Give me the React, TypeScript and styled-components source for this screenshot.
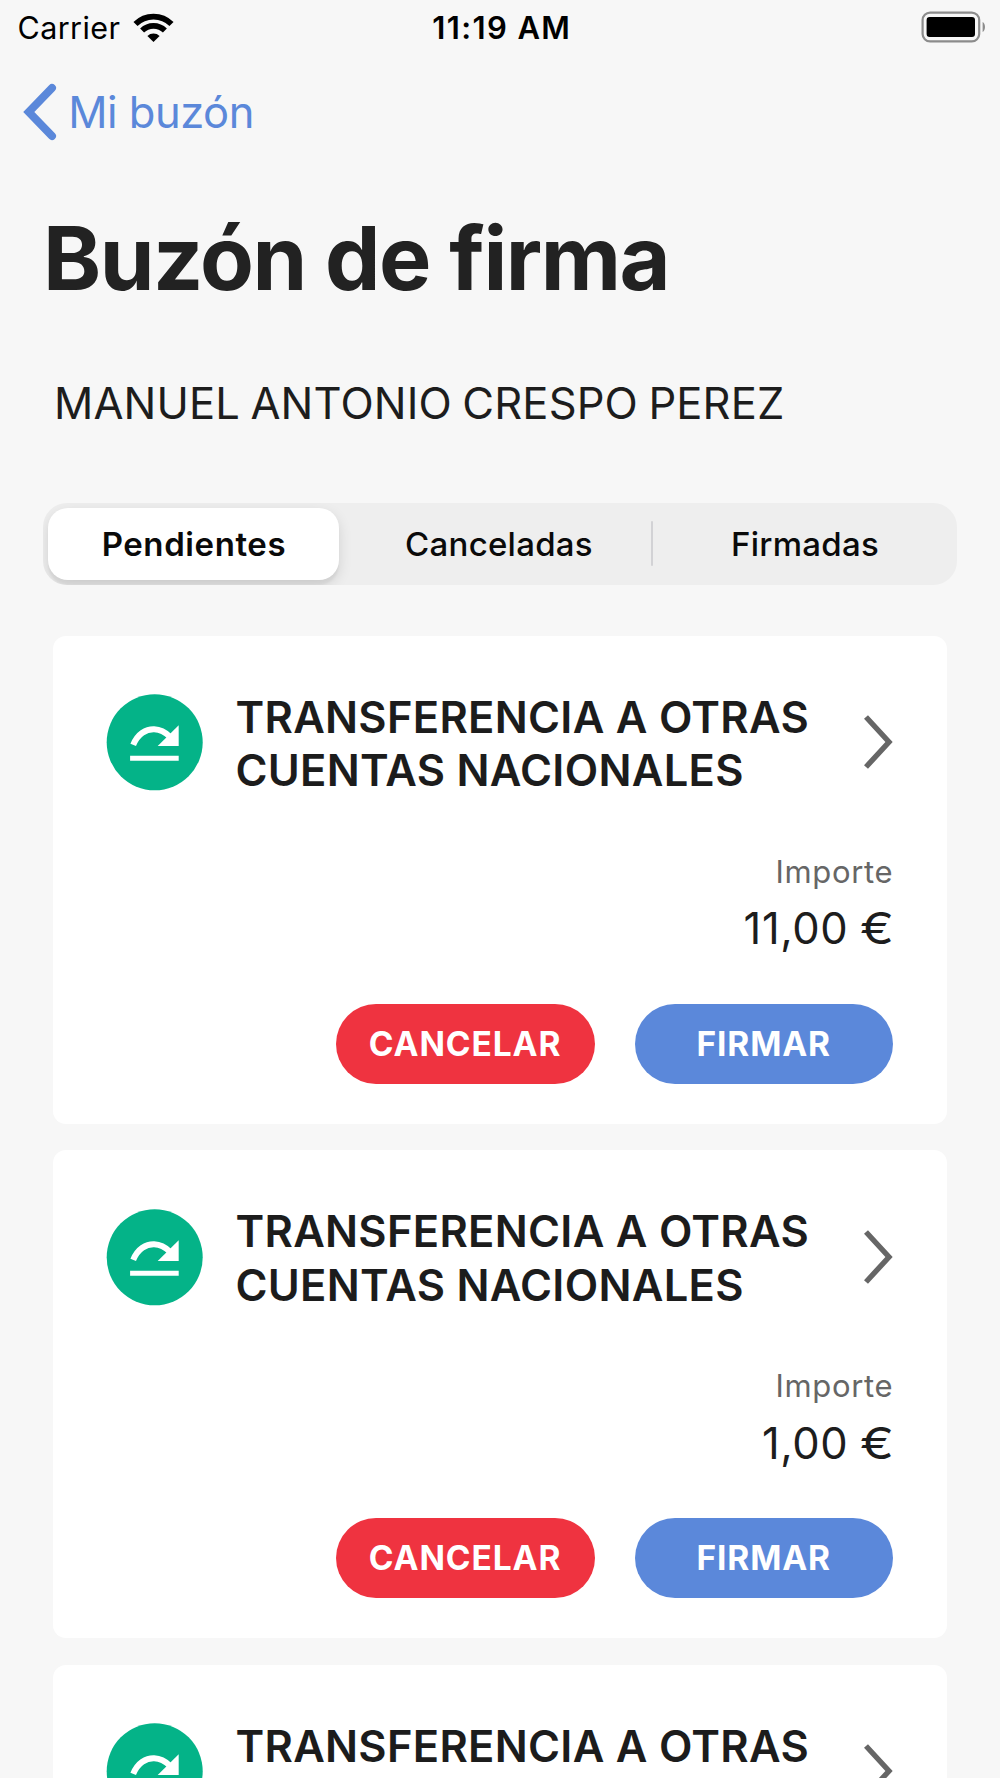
import React from "react";
import styled, { createGlobalStyle } from "styled-components";

const GlobalStyle = createGlobalStyle`
  *, *::before, *::after { box-sizing: border-box; }
  html, body { margin: 0; padding: 0; background: #f7f7f7; }
  body { font-family: Inter, "Liberation Sans", sans-serif; color: #1d1d1d; }
  h1, h2, p { margin: 0; }
  button { font-family: inherit; border: 0; padding: 0; margin: 0; background: none; color: inherit; }
  svg { display: block; flex: none; }
`;

const Screen = styled.div`
  width: 1000px;
  height: 1778px;
  overflow: hidden;
  background: #f7f7f7;
  display: flex;
  flex-direction: column;
`;

const StatusBar = styled.div`
  flex: none;
  height: 54px;
  padding: 0 14px 0 17.5px;
  display: grid;
  grid-template-columns: 1fr auto 1fr;
  align-items: center;
  color: #000;
  font-size: 30.5px;
  line-height: 53px;
`;

const CarrierBox = styled.div`
  display: flex;
  align-items: center;
  gap: 12.5px;
  letter-spacing: 0.42px;
`;

const Clock = styled.div`
  padding-top: 1px;
  font-size: 31px;
  font-weight: 600;
  line-height: 54px;
  letter-spacing: 1.4px;
`;

const BatteryBox = styled.div`
  display: flex;
  justify-content: flex-end;
  padding-bottom: 1px;
`;

const NavBar = styled.nav`
  flex: none;
  height: 116px;
  padding-left: 21px;
  display: flex;
  align-items: center;
`;

const BackLink = styled.button`
  display: flex;
  align-items: center;
  gap: 9.3px;
  color: #5b88da;
  font-size: 43.5px;
  letter-spacing: -0.5px;
  line-height: 60px;
`;

const PageTitle = styled.h1`
  flex: none;
  margin-top: 35px;
  padding-left: 43px;
  font-size: 88px;
  font-weight: 700;
  line-height: 106px;
  letter-spacing: -1.53px;
  color: #222;
`;

const HolderName = styled.p`
  flex: none;
  margin-top: 66px;
  padding-left: 54px;
  font-size: 43.5px;
  line-height: 52px;
  letter-spacing: 0.14px;
  word-spacing: -2px;
`;

const Segmented = styled.div`
  flex: none;
  margin: 73.7px 43px 0 43.3px;
  height: 82.3px;
  padding: 5px 0 5px 4.7px;
  border-radius: 24px;
  background: #eee;
  overflow: hidden;
  display: flex;
  align-items: center;
`;

const Segment = styled.button<{ $active?: boolean }>`
  height: 72px;
  width: ${(p) => (p.$active ? "290.8px" : "304px")};
  margin-right: ${(p) => (p.$active ? "8.2px" : "0")};
  padding-left: ${(p) => (p.$active ? "1px" : "0")};
  border-radius: 20px;
  background: ${(p) => (p.$active ? "#fff" : "transparent")};
  box-shadow: ${(p) => (p.$active ? "0 5px 14px rgba(0, 0, 0, 0.12), 0 5px 2px rgba(0, 0, 0, 0.04)" : "none")};
  font-size: 33px;
  font-weight: ${(p) => (p.$active ? 600 : 500)};
  letter-spacing: ${(p) => (p.$active ? "0.58px" : "0.25px")};
  line-height: 72px;
  text-align: center;
  color: #0a0a0a;
`;

const Divider = styled.span`
  width: 2px;
  height: 45px;
  border-radius: 1px;
  background: #d2d2d5;
`;

const CardList = styled.div`
  flex: none;
  margin: 51px 53.4px 0 53.3px;
  display: flex;
  flex-direction: column;
  gap: 26.4px;
`;

const Card = styled.article`
  height: 488px;
  padding: 53px 53.3px 0;
  border-radius: 13px;
  background: #fff;
  display: flex;
  flex-direction: column;
`;

const CardHeader = styled.header`
  height: 107px;
  display: flex;
  align-items: center;
`;

const CardTitle = styled.h2`
  flex: 1;
  height: 107px;
  margin-left: 32.9px;
  padding-top: 2px;
  font-size: 43.5px;
  font-weight: 600;
  line-height: 53.3px;
  letter-spacing: 0.28px;
  white-space: pre-line;
  color: #1c1c1c;
`;

const AmountLabel = styled.p`
  margin-top: 56px;
  text-align: right;
  font-size: 31px;
  line-height: 40px;
  letter-spacing: 0.66px;
  color: #666;
`;

const Amount = styled.p`
  margin: 10.2px -1px 0 0;
  display: flex;
  justify-content: flex-end;
  gap: 17px;
  font-size: 43.5px;
  line-height: 52px;
  letter-spacing: 0.6px;
`;

const Currency = styled.span`
  letter-spacing: 0;
  transform: scaleX(1.17);
  transform-origin: right center;
`;

const Actions = styled.div`
  margin-top: 49.5px;
  display: flex;
  justify-content: flex-end;
  gap: 40px;
`;

const PillButton = styled.button<{ $color: string }>`
  width: 258.7px;
  height: 80px;
  padding-right: 0.5px;
  border-radius: 40px;
  background: ${(p) => p.$color};
  color: #fff;
  font-size: 33.5px;
  font-weight: 700;
  letter-spacing: 0.88px;
  line-height: 80px;
  text-align: center;
`;

const WifiIcon = () => (
  <svg width="41" height="30" viewBox="0 0 41 30" fill="none">
    <path d="M2.5 11 A25.5 25.5 0 0 1 38.5 11" stroke="#000" strokeWidth="5.8" />
    <path d="M9.1 17.6 A16.1 16.1 0 0 1 31.9 17.6" stroke="#000" strokeWidth="5.6" />
    <path d="M20.5 29 L14.4 22.9 A8.7 8.7 0 0 1 26.6 22.9 Z" fill="#000" />
  </svg>
);

const BatteryIcon = () => (
  <svg width="65" height="32" viewBox="0 0 65 32" fill="none">
    <rect x="1.6" y="1.6" width="56.6" height="28.8" rx="7.5" stroke="#8c8c8c" strokeWidth="2.2" />
    <rect x="5.6" y="5.9" width="48.4" height="20.2" rx="3" fill="#000" />
    <path d="M61.6 11 C64.8 12.5 64.8 19.5 61.6 21 Z" fill="#8c8c8c" />
  </svg>
);

const BackIcon = () => (
  <svg width="38" height="60" viewBox="0 0 38 60" fill="none">
    <path d="M31 6 L7.8 30 L31 54" stroke="#5b88da" strokeWidth="8" strokeLinecap="round" />
  </svg>
);

const TransferIcon = () => (
  <svg width="96" height="96" viewBox="0.3 -0.3 96 96" fill="none" overflow="visible">
    <circle cx="48" cy="48" r="48" fill="#04b388" />
    <path d="M26.5 50.6 C31 39.5 39.5 34.6 47.5 34.9 C54 35.2 59 38.2 63 42.2" stroke="#fff" strokeWidth="6" />
    <path d="M72 31 V51.8 H51 Z" fill="#fff" />
    <path d="M23.4 64 H72" stroke="#fff" strokeWidth="5" />
  </svg>
);

const ChevronIcon = () => (
  <svg width="30" height="56" viewBox="0 0 30 56" fill="none">
    <path d="M3 3 L26 28 L3 53" stroke="#666" strokeWidth="5.4" />
  </svg>
);

interface Order {
  title: string;
  amount?: string;
}

const orders: Order[] = [
  { title: "TRANSFERENCIA A OTRAS\nCUENTAS NACIONALES", amount: "11,00" },
  { title: "TRANSFERENCIA A OTRAS\nCUENTAS NACIONALES", amount: "1,00" },
  { title: "TRANSFERENCIA A OTRAS" },
];

function OrderCard({ order }: { order: Order }) {
  return (
    <Card>
      <CardHeader>
        <TransferIcon />
        <CardTitle>{order.title}</CardTitle>
        <ChevronIcon />
      </CardHeader>
      {order.amount && (
        <>
          <AmountLabel>Importe</AmountLabel>
          <Amount>
            <span>{order.amount}</span>
            <Currency>€</Currency>
          </Amount>
          <Actions>
            <PillButton $color="#ef3340">CANCELAR</PillButton>
            <PillButton $color="#5b88da">FIRMAR</PillButton>
          </Actions>
        </>
      )}
    </Card>
  );
}

export default function App() {
  return (
    <>
      <GlobalStyle />
      <Screen>
        <StatusBar>
          <CarrierBox>
            Carrier
            <WifiIcon />
          </CarrierBox>
          <Clock>11:19 AM</Clock>
          <BatteryBox>
            <BatteryIcon />
          </BatteryBox>
        </StatusBar>
        <NavBar>
          <BackLink>
            <BackIcon />
            Mi buzón
          </BackLink>
        </NavBar>
        <PageTitle>Buzón de firma</PageTitle>
        <HolderName>MANUEL ANTONIO CRESPO PEREZ</HolderName>
        <Segmented>
          <Segment $active>Pendientes</Segment>
          <Segment>Canceladas</Segment>
          <Divider />
          <Segment>Firmadas</Segment>
        </Segmented>
        <CardList>
          {orders.map((order, i) => (
            <OrderCard key={i} order={order} />
          ))}
        </CardList>
      </Screen>
    </>
  );
}
